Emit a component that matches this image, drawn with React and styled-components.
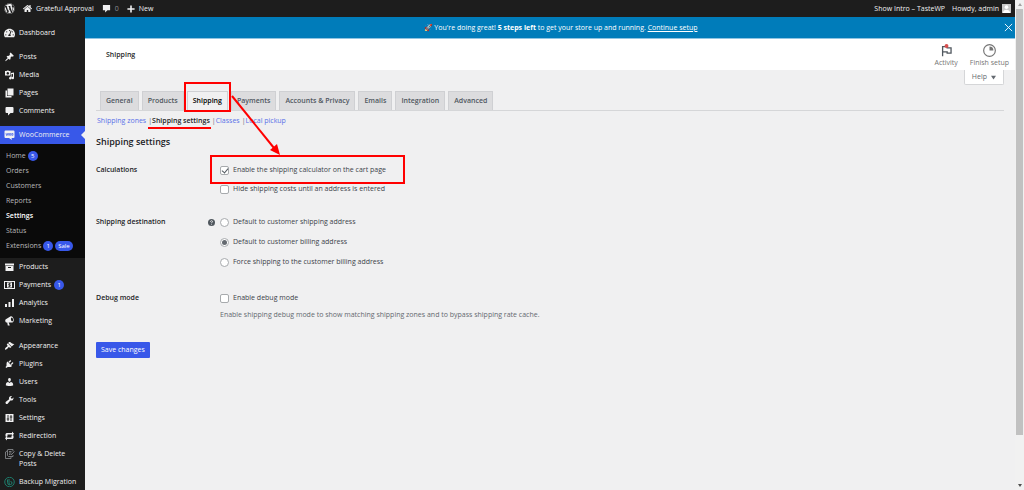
import React from "react";
import styled, { createGlobalStyle } from "styled-components";
import { FaWordpress, FaHome, FaTachometerAlt } from "react-icons/fa";

const GlobalStyle = createGlobalStyle`
	* {
		box-sizing: border-box;
	}

	body {
		margin: 0;
		background: #f0f0f1;
		color: #3c434a;
		font-family: "Open Sans", "Noto Sans", sans-serif;
		font-size: 7px;
		line-height: 10px;
	}

	button, input {
		font: inherit;
		margin: 0;
	}

	a {
		color: inherit;
		text-decoration: none;
	}

	h1, h2, p, ul {
		margin: 0;
		padding: 0;
	}

	ul {
		list-style: none;
	}
`;

// Shell

const Shell = styled.div`
	display: flex;
	height: 100vh;
	overflow: hidden;
`;

const Page = styled.div`
	display: flex;
	flex-direction: column;
	flex: 1;
	min-width: 0;
`;

const Body = styled.div`
	display: flex;
	flex: 1;
	min-height: 0;
`;

const ScrollTrack = styled.div`
	display: flex;
	flex-direction: column;
	align-items: center;
	gap: 3px;
	width: 9px;
	padding: 3px 1px;
	background: #f1f1f1;
`;

const ScrollArrow = styled.span`
	border: 2px solid transparent;
	border-top-width: ${(props) => (props.$down ? "3px" : "0")};
	border-bottom-width: ${(props) => (props.$down ? "0" : "3px")};
	border-top-color: ${(props) => (props.$down ? "#505050" : "transparent")};
	border-bottom-color: ${(props) => (props.$down ? "transparent" : "#a3a3a3")};
`;

const ScrollThumb = styled.div`
	width: 100%;
	flex: 10;
	background: #c1c1c1;
`;

const ScrollRest = styled.div`
	flex: 1;
`;

// Admin bar

const AdminBar = styled.header`
	display: flex;
	align-items: center;
	justify-content: space-between;
	height: 17px;
	padding: 0 4px;
	background: #1d1d1d;
	color: #f0f0f1;
`;

const BarGroup = styled.nav`
	display: flex;
	align-items: center;
	gap: ${(props) => props.$gap};
`;

const BarLink = styled.a`
	display: flex;
	align-items: center;
	gap: ${(props) => props.$space || "4px"};
	color: ${(props) => (props.$muted ? "#8c8f94" : "#f0f0f1")};
`;

const Avatar = styled.span`
	display: flex;
	width: 9px;
	height: 9px;
	background: #c8c8c8;
	color: #fff;
`;

// Side menu

const SideMenu = styled.nav`
	flex: none;
	width: 85px;
	padding-top: 7px;
	background: #1d1d1d;
	overflow: hidden;
`;

const Separator = styled.li`
	height: ${(props) => (props.$large ? "7px" : "6px")};
`;

const MenuLink = styled.a`
	display: grid;
	grid-template-columns: 11px 1fr;
	align-items: start;
	gap: 4px;
	min-height: 18px;
	padding: 4px;
	color: #f0f0f1;
	position: relative;
	background: ${(props) => (props.$current ? "#3858e9" : "transparent")};

	&::after {
		content: "";
		display: ${(props) => (props.$current ? "block" : "none")};
		position: absolute;
		right: 0;
		top: 5px;
		border: 4px solid transparent;
		border-left-width: 0;
		border-right-color: #f0f0f1;
	}

	svg {
		display: block;
		width: 11px;
		height: 10px;
	}
`;

const MenuLabel = styled.span`
	display: flex;
	align-items: center;
	gap: 3px;
`;

const SubMenu = styled.ul`
	padding: 4px 0 5px 6px;
	background: #0a0a0a;
`;

const SubLink = styled.a`
	display: flex;
	align-items: center;
	gap: 2px;
	height: 15px;
	color: ${(props) => (props.$current ? "#fff" : "#b8b8b9")};
	font-weight: ${(props) => (props.$current ? 600 : 400)};
`;

const Badge = styled.span`
	min-width: 10px;
	height: 10px;
	padding: 0 3px;
	border-radius: 5px;
	background: #3858e9;
	color: #fff;
	font-size: 6px;
	font-weight: 400;
	text-align: center;
`;

// Main column

const Main = styled.main`
	flex: 1;
	min-width: 0;
`;

const Notice = styled.div`
	display: flex;
	align-items: center;
	height: 22px;
	padding: 0 2px 0 32px;
	background: #007cba;
	border-bottom: 1px solid #8fc4e2;
	color: #fff;
`;

const NoticeText = styled.p`
	flex: 1;
	text-align: center;

	a {
		text-decoration: underline;
	}
`;

const CloseButton = styled.button`
	display: flex;
	padding: 0;
	border: none;
	background: none;
	color: #fff;
`;

const PageHeader = styled.div`
	display: flex;
	align-items: center;
	justify-content: space-between;
	height: 31px;
	padding: 0 6px 0 21px;
	background: #fff;
`;

const PageTitle = styled.h1`
	font-size: 7px;
	font-weight: 600;
	color: #1e1e1e;
`;

const HeaderActions = styled.div`
	display: flex;
	gap: 12px;
`;

const HeaderButton = styled.button`
	display: flex;
	flex-direction: column;
	align-items: center;
	gap: 1px;
	padding: 2px 0 0;
	border: none;
	background: none;
	color: #757575;
`;

const Content = styled.div`
	padding: 0 11px;
`;

const HelpRow = styled.div`
	display: flex;
	justify-content: flex-end;
`;

const HelpButton = styled.button`
	display: flex;
	align-items: center;
	gap: 4px;
	height: 15px;
	padding: 0 7px;
	border: 1px solid #d5d6d8;
	border-top: none;
	border-radius: 0 0 2px 2px;
	background: #fff;
	color: #646970;
`;

const Tabs = styled.nav`
	display: flex;
	align-items: flex-end;
	gap: 3px;
	margin-top: 6px;
	padding-left: 4px;
	border-bottom: 1px solid #d5d6d8;
`;

const Tab = styled.a`
	height: 19px;
	padding: 4px 5px;
	border: 1px solid #cfd0d3;
	border-bottom: none;
	background: ${(props) => (props.$active ? "#f0f0f1" : "#dcdcde")};
	color: ${(props) => (props.$active ? "#000" : "#50575e")};
	font-weight: 600;
	white-space: nowrap;
	position: relative;
`;

const SubTabs = styled.ul`
	display: flex;
	gap: 2px;
	padding: 5px 1px 0;
	color: #646970;

	li {
		position: relative;
	}

	li + li::before {
		content: "|";
	}

	a {
		color: #5a70e8;
	}

	a[aria-current] {
		color: #1d2327;
		font-weight: 600;
	}
`;

const SectionTitle = styled.h2`
	margin-top: 9px;
	font-size: 9px;
	line-height: 14px;
	font-weight: 600;
	color: #1d2327;
`;

const Form = styled.form`
	display: flex;
	flex-direction: column;
	align-items: flex-start;
`;

const Field = styled.fieldset`
	display: grid;
	grid-template-columns: 112px 1fr;
	width: 100%;
	margin: 0;
	padding: 0;
	border: none;
	margin-top: ${(props) => props.$space};
`;

const FieldName = styled.span`
	font-weight: 600;
	color: #1d2327;
`;

const Options = styled.div`
	display: grid;
	grid-template-columns: 12px 1fr;
	justify-items: start;
	row-gap: ${(props) => props.$gap};

	> * {
		grid-column: 2;
	}
`;

const Tip = styled.span`
	&& {
		grid-column: 1;
		grid-row: 1;
	}
	display: flex;
	align-items: center;
	height: 10px;
	color: #50575e;
`;

const Choice = styled.label`
	display: flex;
	align-items: center;
	gap: 4px;
	height: 10px;
	position: relative;

	input {
		appearance: none;
		display: grid;
		place-items: center;
		width: 9px;
		height: 9px;
		border: 1px solid #a7aaad;
		border-radius: ${(props) => (props.$round ? "50%" : "2px")};
		background: #fff;
	}

	input[type="radio"]:checked::before {
		content: "";
		width: 5px;
		height: 5px;
		border-radius: 50%;
		background: #646970;
	}

	input[type="checkbox"]:checked::before {
		content: "";
		width: 3px;
		height: 5px;
		border: solid #50575e;
		border-width: 0 1px 1px 0;
		transform: rotate(40deg);
	}
`;

const Description = styled.p`
	color: #646970;
`;

const SaveButton = styled.button`
	height: 16px;
	margin-top: 22px;
	padding: 0 5px;
	border: none;
	border-radius: 1px;
	background: #3858e9;
	color: #fff;
`;

// Red marks laid over the page

const Frame = styled.span`
	position: absolute;
	inset: ${(props) => props.$inset};
	border: 2px solid #f00;
	z-index: 2;
	pointer-events: none;
`;

const Underline = styled.span`
	position: absolute;
	left: 0;
	right: -1px;
	bottom: -3px;
	height: 2px;
	background: #f00;
`;

const Arrow = styled.svg`
	position: absolute;
	left: 44px;
	top: 4px;
	z-index: 3;
	overflow: visible;
	pointer-events: none;
`;

// Icons, on a 20 unit grid

const Glyph = ({ size = 11, children }) => (
	<svg width={size} height={size} viewBox="0 0 20 20" fill="currentColor" aria-hidden="true">
		{children}
	</svg>
);

const icons = {
	pin: <Glyph><path d="M10.44 3.02l1.82-1.82 6.36 6.35-1.83 1.82c-1.05-.68-2.48-.57-3.41.36l-.75.75c-.92.93-1.04 2.35-.35 3.41l-1.83 1.82-2.41-2.41-2.8 2.79c-.42.42-3.38 2.71-3.8 2.29s1.86-3.39 2.28-3.81l2.79-2.79L4.1 9.36l1.83-1.82c1.05.69 2.48.57 3.4-.36l.75-.75c.93-.92 1.05-2.35.36-3.41z" /></Glyph>,
	comment: <Glyph><path d="M4 2h12a2 2 0 0 1 2 2v8a2 2 0 0 1-2 2h-4l-5 5v-5H4a2 2 0 0 1-2-2V4a2 2 0 0 1 2-2z" /></Glyph>,
	media: <Glyph><path fillRule="evenodd" d="M2 2h2l1-1h3l1 1h3v9H1V2zM6.500 4a2.500 2.500 0 1 0 .1 0zM13 6l6-1v11a2.500 2.500 0 1 1-2-2.400V8l-3 .5v8a2.500 2.500 0 1 1-2-2.400V12h1z" /></Glyph>,
	pages: <Glyph><path d="M6 1h12v14H6zM2 5h3v11h9v3H2z" /></Glyph>,
	woo: (
		<Glyph>
			<path d="M2 1h16a2 2 0 0 1 2 2v11a2 2 0 0 1-2 2h-4l1 4-6-4H2a2 2 0 0 1-2-2V3a2 2 0 0 1 2-2z" />
			<path fill="none" stroke="#3858e9" strokeWidth="1.300" d="M3 6l1 5 2-4 1 4 1.500-5M10 7h2.500v3.500H10zM14.500 7H17v3.500h-2.500z" />
		</Glyph>
	),
	products: <Glyph><path fillRule="evenodd" d="M1 3h18v4H1zM2 8h16v10H2zM7 10v2h6v-2z" /></Glyph>,
	payments: (
		<Glyph>
			<path fillRule="evenodd" d="M-1 2h22v16H-1zM1 4v12h18V4z" />
			<path d="M5 5h10v10H5z" />
			<path fill="none" stroke="#1d1d1d" strokeWidth="1.500" d="M12.500 7.500h-4v2.500h3v2.500h-4M10 6v8" />
		</Glyph>
	),
	analytics: <Glyph><path d="M1 12h4v6H1zM8 8h4v10H8zM15 2h4v16h-4z" /></Glyph>,
	megaphone: <Glyph><path fillRule="evenodd" d="M18.150 5.940c.46 1.620.38 3.220-.02 4.480-.42 1.280-1.260 2.180-2.300 2.480-.16.060-.26.060-.4.060L8.230 13l2.220 5.500c.02.3-.2.500-.48.500H6.950c-.3 0-.5-.2-.48-.5L5.470 13H4.250c-1.200 0-2.300-1-2.620-2.520-.5-2 .1-3.700 1.060-4.120l9.020-5.400c2.600-1.400 5.600 1.300 6.440 4.980zM14.500 3c-1.600.3-2 2.300-1.500 4.500.5 2 1.700 3.600 3 3.200 1.300-.5 1.400-2.500 1-4.200-.5-2-1.400-3.500-2.500-3.500z" /></Glyph>,
	brush: <Glyph><path d="M14.480 11.060L7.410 3.990l1.500-1.500c.5-.56 2.300-.47 3.510.32 1.210.8 1.430 1.280 2.910 2.100 1.180.64 2.450 1.260 4.450.85zm-.71.71L6.700 4.700 4.930 6.470c-.39.39-.39 1.020 0 1.410l1.060 1.060c.39.39.39 1.030 0 1.420-.6.600-1.430 1.110-2.210 1.690-.35.260-.7.530-1.010.84C1.430 14.230.4 16.080 1.400 17.070c.99 1 2.840-.03 4.180-1.360.31-.31.58-.66.85-1.020.57-.78 1.080-1.610 1.690-2.210.39-.39 1.020-.39 1.410 0l1.060 1.060c.39.39 1.020.39 1.410 0z" /></Glyph>,
	plug: <Glyph><path d="M13.110 4.360L9.870 7.600 8 5.730l3.240-3.240c.35-.34 1.050-.2 1.560.32.52.51.66 1.210.31 1.550zm-8 1.770l.91-1.120 9.010 9.010-1.190.84c-.71.71-2.630 1.160-3.820 1.160H6.140L4.900 17.260c-.59.59-1.540.59-2.120 0-.59-.58-.59-1.530 0-2.120l1.240-1.240v-3.880c0-1.130.4-3.190 1.090-3.890zm7.260 3.970l3.240-3.240c.34-.35 1.040-.21 1.550.31.52.51.66 1.210.31 1.550l-3.240 3.250z" /></Glyph>,
	user: <Glyph><path d="M10 9.250c-2.270 0-2.730-3.440-2.730-3.440C7 4.020 7.820 2 9.970 2c2.160 0 2.980 2.020 2.710 3.810 0 0-.41 3.440-2.680 3.440zm0 2.570L12.720 10c2.390 0 4.520 2.330 4.520 4.530v2.490s-3.650 1.130-7.240 1.130c-3.650 0-7.240-1.130-7.240-1.130v-2.490c0-2.250 1.940-4.480 4.470-4.480z" /></Glyph>,
	wrench: <Glyph><path d="M16.680 9.770c-1.340 1.340-3.300 1.670-4.950.99l-5.410 6.520c-.99.99-2.590.99-3.580 0s-.99-2.590 0-3.570l6.520-5.420c-.68-1.650-.35-3.610.99-4.950 1.280-1.280 3.120-1.620 4.720-1.060l-2.890 2.890 2.820 2.820 2.860-2.870c.53 1.580.18 3.390-1.080 4.650z" /></Glyph>,
	settings: (
		<Glyph>
			<path d="M2 2h16v16H2z" />
			<path fill="none" stroke="#1d1d1d" strokeWidth="1.800" d="M7 4v12M4.500 12h5M13 4v12M10.500 8h5" />
		</Glyph>
	),
	redirection: <Glyph><path d="M4 4h11V1l4 4.500-4 4.500V7H6v4H2V6zM16 16H5v3l-4-4.500L5 10v3h9V9h4v5z" /></Glyph>,
	copy: (
		<Glyph>
			<path fill="none" stroke="#8f9296" strokeWidth="1.600" d="M7 1h10v4M17 12v3H8L6 13V1M5 4L2 6v13h11v-3M9 5h5M9 8h5M9 11h3M13 12l7-7" />
		</Glyph>
	),
	backup: (
		<Glyph>
			<circle cx="10" cy="10" r="9.500" fill="none" stroke="#1d7d6d" strokeWidth="2" />
			<path fill="none" stroke="#1d7d6d" strokeWidth="2" d="M9 4v8a3 3 0 1 0 3-3M6 5v6a5 5 0 0 0 5 5" />
		</Glyph>
	),
};

const mainMenu = [
	{ label: "Dashboard", icon: <FaTachometerAlt /> },
	{ separator: true },
	{ label: "Posts", icon: icons.pin },
	{ label: "Media", icon: icons.media },
	{ label: "Pages", icon: icons.pages },
	{ label: "Comments", icon: icons.comment },
	{ separator: true },
	{ label: "WooCommerce", icon: icons.woo, current: true },
];

const subMenu = [
	{ label: "Home", badges: ["5"] },
	{ label: "Orders" },
	{ label: "Customers" },
	{ label: "Reports" },
	{ label: "Settings", current: true },
	{ label: "Status" },
	{ label: "Extensions", badges: ["1", "Sale"] },
];

const lowerMenu = [
	{ label: "Products", icon: icons.products },
	{ label: "Payments", icon: icons.payments, badge: "1" },
	{ label: "Analytics", icon: icons.analytics },
	{ label: "Marketing", icon: icons.megaphone },
	{ separator: true, large: true },
	{ label: "Appearance", icon: icons.brush },
	{ label: "Plugins", icon: icons.plug },
	{ label: "Users", icon: icons.user },
	{ label: "Tools", icon: icons.wrench },
	{ label: "Settings", icon: icons.settings },
	{ label: "Redirection", icon: icons.redirection },
	{ label: "Copy & Delete Posts", icon: icons.copy },
	{ label: "Backup Migration", icon: icons.backup },
];

const tabs = ["General", "Products", "Shipping", "Payments", "Accounts & Privacy", "Emails", "Integration", "Advanced"];

const MenuItem = ({ item }) => {
	if (item.separator) {
		return <Separator $large={item.large} />;
	}

	return (
		<li>
			<MenuLink href="#" $current={item.current}>
				{item.icon}
				<MenuLabel>
					{item.label}
					{item.badge ? <Badge>{item.badge}</Badge> : null}
				</MenuLabel>
			</MenuLink>
		</li>
	);
};

const Sidebar = () => (
	<SideMenu>
		<ul>
			{mainMenu.map((item, i) => <MenuItem key={i} item={item} />)}
			<li>
				<SubMenu>
					{subMenu.map((item) => (
						<li key={item.label}>
							<SubLink href="#" $current={item.current}>
								{item.label}
								{item.badges?.map((badge) => <Badge key={badge}>{badge}</Badge>)}
							</SubLink>
						</li>
					))}
				</SubMenu>
			</li>
			{lowerMenu.map((item, i) => <MenuItem key={i} item={item} />)}
		</ul>
	</SideMenu>
);

const TopBar = () => (
	<AdminBar>
		<BarGroup $gap="8px">
			<BarLink href="#" aria-label="WordPress"><FaWordpress size={11} /></BarLink>
			<BarLink href="#"><FaHome size={9} />Grateful Approval</BarLink>
			<BarLink href="#" $muted><Glyph size={9}><path fill="#f0f0f1" d="M2 2h16v12h-6l-5 5v-5H2z" /></Glyph>0</BarLink>
			<BarLink href="#"><Glyph size={8}><path d="M8 1h4v7h7v4h-7v7H8v-7H1V8h7z" /></Glyph>New</BarLink>
		</BarGroup>
		<BarGroup $gap="7px">
			<BarLink href="#">Show Intro – TasteWP</BarLink>
			<BarLink href="#" $space="3px">
				Howdy, admin
				<Avatar>
					<Glyph size={9}><circle cx="10" cy="7" r="4" /><path d="M2 20c0-10 16-10 16 0z" /></Glyph>
				</Avatar>
			</BarLink>
		</BarGroup>
	</AdminBar>
);

const SettingsForm = () => (
	<Form onSubmit={(e) => e.preventDefault()}>
		<Field $space="16px">
			<FieldName>Calculations</FieldName>
			<Options $gap="9px">
				<Choice>
					<input type="checkbox" defaultChecked />
					Enable the shipping calculator on the cart page
					<Frame $inset="-10px -19px -9px -10px" />
				</Choice>
				<Choice>
					<input type="checkbox" />
					Hide shipping costs until an address is entered
				</Choice>
			</Options>
		</Field>
		<Field $space="23px">
			<FieldName>Shipping destination</FieldName>
			<Options $gap="10px">
				<Tip>
					<Glyph size={7}>
						<circle cx="10" cy="10" r="10" />
						<path fill="none" stroke="#f0f0f1" strokeWidth="2.500" d="M7 8c0-4 6-4 6-1 0 2-3 2-3 5M10 14v2" />
					</Glyph>
				</Tip>
				<Choice $round>
					<input type="radio" name="destination" />
					Default to customer shipping address
				</Choice>
				<Choice $round>
					<input type="radio" name="destination" defaultChecked />
					Default to customer billing address
				</Choice>
				<Choice $round>
					<input type="radio" name="destination" />
					Force shipping to the customer billing address
				</Choice>
			</Options>
		</Field>
		<Field $space="26px">
			<FieldName>Debug mode</FieldName>
			<Options $gap="7px">
				<Choice>
					<input type="checkbox" />
					Enable debug mode
				</Choice>
				<Description>
					Enable shipping debug mode to show matching shipping zones and to bypass shipping rate cache.
				</Description>
			</Options>
		</Field>
		<SaveButton type="submit">Save changes</SaveButton>
	</Form>
);

const App = () => (
	<>
		<GlobalStyle />
		<Shell>
			<Page>
				<TopBar />
				<Body>
					<Sidebar />
					<Main>
						<Notice>
							<NoticeText>🚀 You're doing great! <b>5 steps left</b> to get your store up and running. <a href="#">Continue setup</a></NoticeText>
							<CloseButton aria-label="Dismiss">
								<Glyph size={9}><path fill="none" stroke="currentColor" strokeWidth="2" d="M2 2l16 16M18 2L2 18" /></Glyph>
							</CloseButton>
						</Notice>
						<PageHeader>
							<PageTitle>Shipping</PageTitle>
							<HeaderActions>
								<HeaderButton>
									<Glyph size={13}>
										<path fill="none" stroke="#50575e" strokeWidth="2" d="M4 19V4h7v2h6v8h-6v-2H4" />
										<circle cx="10" cy="3" r="3" fill="#d94f4f" />
									</Glyph>
									Activity
								</HeaderButton>
								<HeaderButton>
									<Glyph size={13}>
										<circle cx="10" cy="10" r="9" fill="none" stroke="currentColor" strokeWidth="1.800" />
										<path d="M10 4a6 6 0 0 1 6 6h-6z" />
									</Glyph>
									Finish setup
								</HeaderButton>
							</HeaderActions>
						</PageHeader>
						<Content>
							<HelpRow>
								<HelpButton>Help <Glyph size={5}><path d="M0 3h20L10 18z" /></Glyph></HelpButton>
							</HelpRow>
							<Tabs>
								{tabs.map((tab) => (
									<Tab key={tab} href="#" $active={tab === "Shipping"}>
										{tab}
										{tab === "Shipping" ? (
											<>
												<Frame $inset="-10px -4px -2px -4px" />
												<Arrow width="50" height="62" viewBox="0 0 50 62">
													<path stroke="#f00" strokeWidth="2" d="M0 0l42 52" />
													<path fill="#f00" d="M48 59l-10-5 7-6z" />
												</Arrow>
											</>
										) : null}
									</Tab>
								))}
							</Tabs>
							<SubTabs>
								<li><a href="#">Shipping zones</a></li>
								<li><a href="#" aria-current="page">Shipping settings</a><Underline /></li>
								<li><a href="#">Classes</a></li>
								<li><a href="#">Local pickup</a></li>
							</SubTabs>
							<SectionTitle>Shipping settings</SectionTitle>
							<SettingsForm />
						</Content>
					</Main>
				</Body>
			</Page>
			<ScrollTrack>
				<ScrollArrow />
				<ScrollThumb />
				<ScrollRest />
				<ScrollArrow $down />
			</ScrollTrack>
		</Shell>
	</>
);

export default App;
